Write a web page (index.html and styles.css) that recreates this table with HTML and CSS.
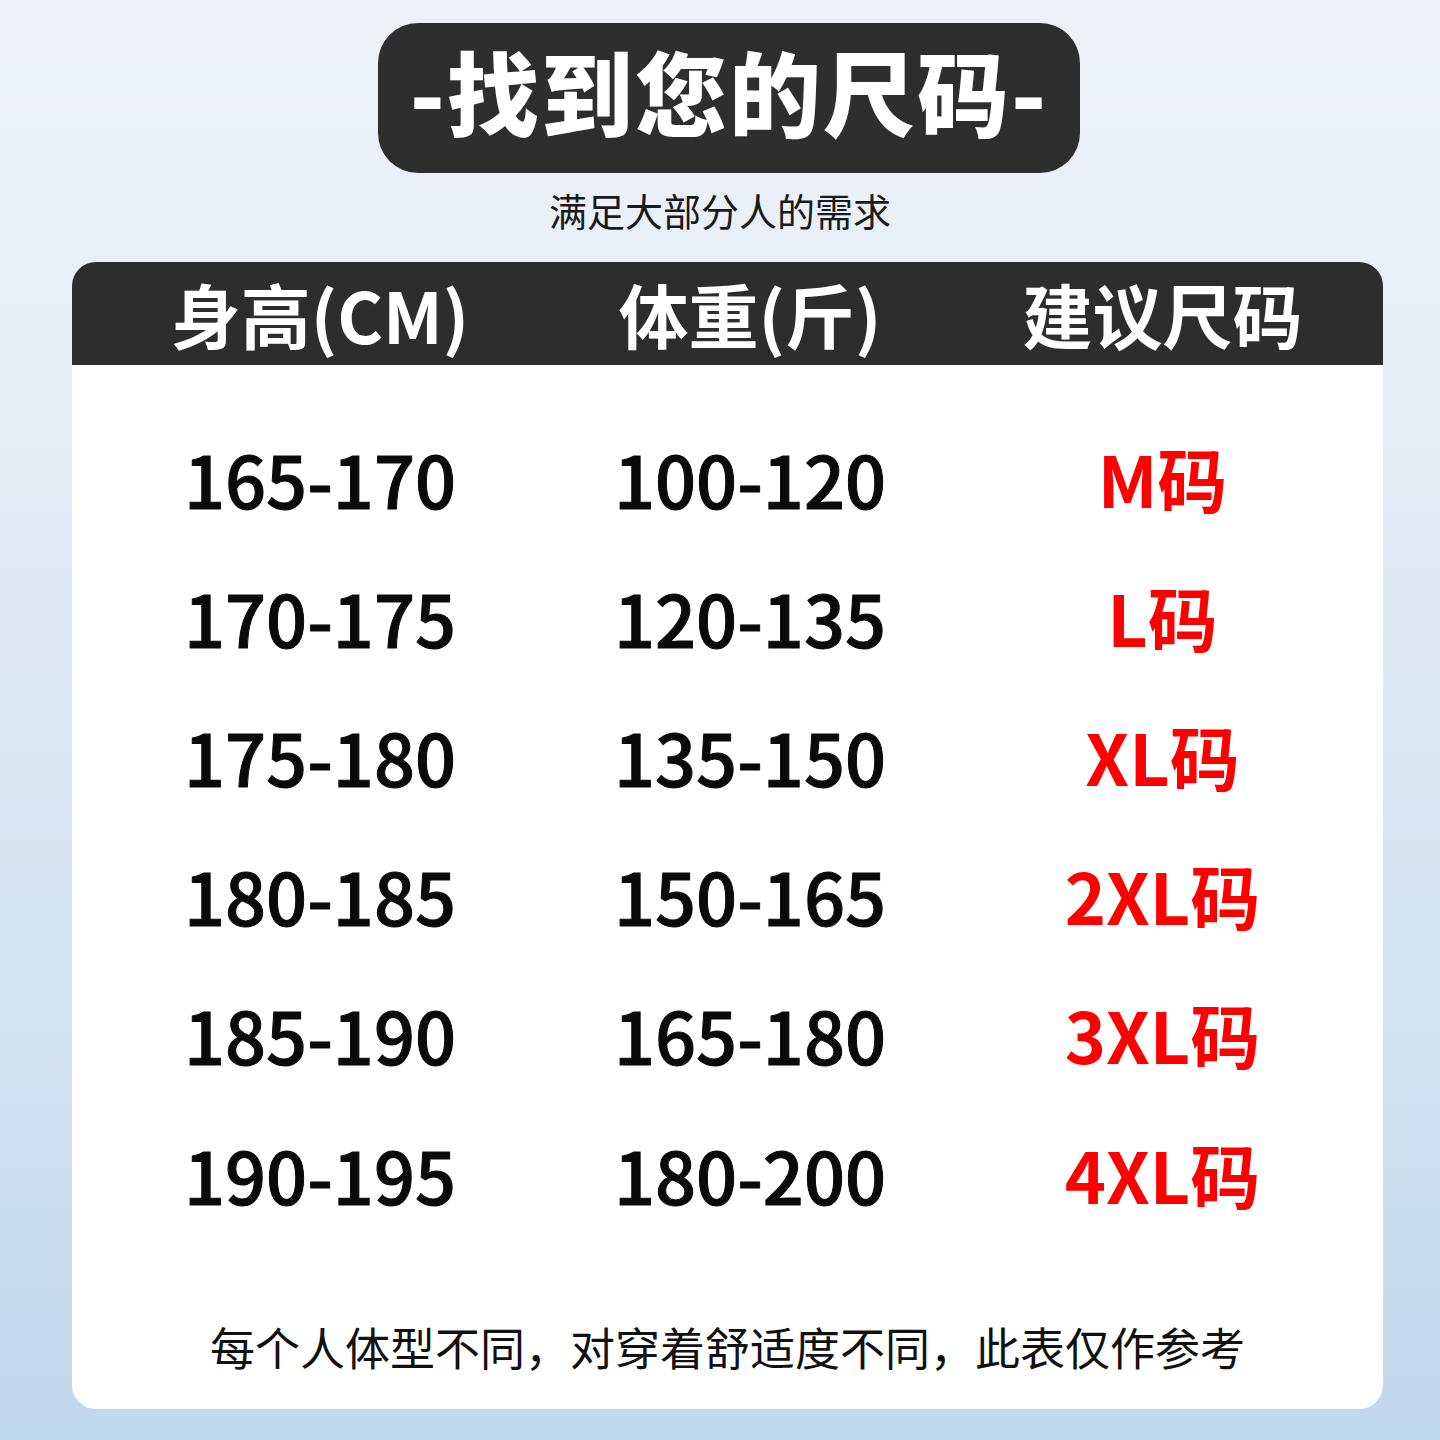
FILE: index.html
```html
<!DOCTYPE html>
<html lang="zh-CN">
<head>
<meta charset="utf-8">
<link rel="stylesheet" href="styles.css">
</head>
<body>
<div class="page">
  <div class="title-box"><span class="title">-找到您的尺码-</span></div>
  <div class="subtitle">满足大部分人的需求</div>
  <div class="card">
    <div class="head">
      <div class="c1">身高(CM)</div>
      <div class="c2">体重(斤)</div>
      <div class="c3">建议尺码</div>
    </div>
    <div class="rows">
      <div class="row"><div class="c1">165-170</div><div class="c2">100-120</div><div class="c3 size">M码</div></div>
      <div class="row"><div class="c1">170-175</div><div class="c2">120-135</div><div class="c3 size">L码</div></div>
      <div class="row"><div class="c1">175-180</div><div class="c2">135-150</div><div class="c3 size">XL码</div></div>
      <div class="row"><div class="c1">180-185</div><div class="c2">150-165</div><div class="c3 size">2XL码</div></div>
      <div class="row"><div class="c1">185-190</div><div class="c2">165-180</div><div class="c3 size">3XL码</div></div>
      <div class="row"><div class="c1">190-195</div><div class="c2">180-200</div><div class="c3 size">4XL码</div></div>
    </div>
    <div class="note">每个人体型不同，对穿着舒适度不同，此表仅作参考</div>
  </div>
</div>
</body>
</html>
```
FILE: styles.css
```css
html, body {
  margin: 0;
  padding: 0;
}
body {
  width: 1440px;
  height: 1440px;
  background: linear-gradient(180deg, #eef2f7 0%, #e5edf6 30%, #d2e2f0 70%, #c2d8ec 100%);
  font-family: "Noto Sans CJK SC", "Noto Sans", sans-serif;
  overflow: hidden;
}
.page {
  padding-top: 23px;
  display: flex;
  flex-direction: column;
}
.title-box {
  margin-left: 378px;
  width: 702px;
  height: 150px;
  box-sizing: border-box;
  padding-bottom: 16px;
  background: #2e2e2e;
  border-radius: 40px;
  display: flex;
  align-items: center;
  justify-content: center;
}
.title {
  color: #fff;
  font-size: 92px;
  font-weight: 900;
  line-height: 1.1;
  letter-spacing: 2px;
}
.subtitle {
  margin-top: 15px;
  text-align: center;
  font-size: 38px;
  line-height: 44px;
  color: #1a1a1a;
  height: 74px;
}
.card {
  margin-left: 72px;
  width: 1311px;
  height: 1147px;
  background: #fff;
  border-radius: 24px;
  display: flex;
  flex-direction: column;
}
.head {
  height: 103px;
  flex-shrink: 0;
  background: #2d2d2d;
  border-radius: 24px 24px 0 0;
  color: #fff;
  display: grid;
  grid-template-columns: 496px 364px 1fr;
  align-items: center;
  font-size: 70px;
  font-weight: 700;
  line-height: normal;
}
.head > div {
  text-align: center;
}
.rows {
  padding-top: 43px;
  display: flex;
  flex-direction: column;
}
.row {
  height: 139.2px;
  display: grid;
  grid-template-columns: 496px 364px 1fr;
  align-items: center;
  font-size: 72px;
  font-weight: 500;
  line-height: 1;
  color: #0a0a0a;
  -webkit-text-stroke: 1px #0a0a0a;
}
.row > div {
  text-align: center;
}
.row > .size {
  font-weight: 700;
  font-size: 70px;
  -webkit-text-stroke: 0;
}
.c3 {
  padding-left: 10px;
}
.size {
  color: #ff0000;
}
.note {
  margin-top: 81px;
  text-align: center;
  font-size: 45px;
  line-height: 1;
  color: #111;
}
```
